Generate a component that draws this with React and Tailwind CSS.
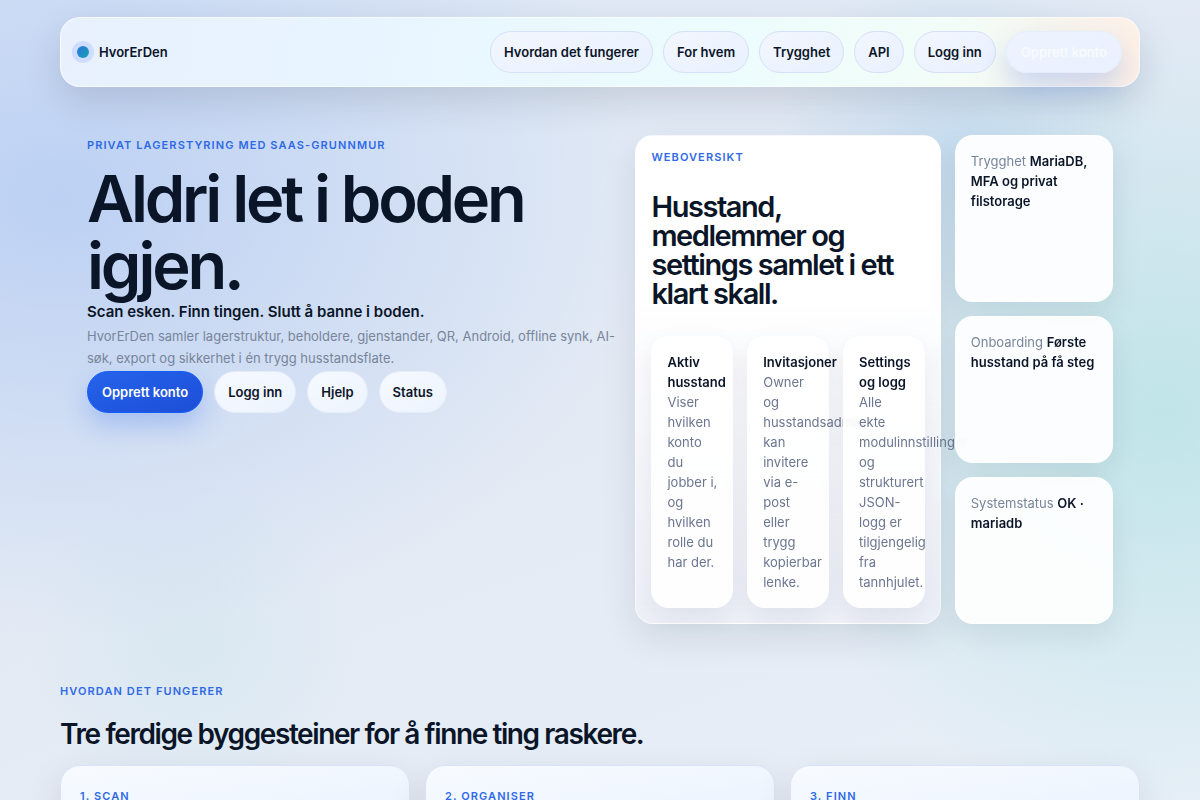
const navLinks = ["Hvordan det fungerer", "For hvem", "Trygghet", "API", "Logg inn"];

const heroLinks = ["Logg inn", "Hjelp", "Status"];

const features = [
  {
    title: "Aktiv husstand",
    text: "Viser hvilken konto du jobber\u00a0i, og hvilken rolle du har der.",
  },
  {
    title: "Invitasjoner",
    text: "Owner og husstandsadmin kan invitere via e-post eller trygg kopierbar lenke.",
  },
  {
    title: "Settings og logg",
    text: "Alle ekte modulinnstillinger og strukturert JSON-logg er tilgjengelig fra tannhjulet.",
  },
];

const facts = [
  { label: "Trygghet", value: "MariaDB, MFA og privat filstorage" },
  { label: "Onboarding", value: "Første husstand på få steg" },
  { label: "Systemstatus", value: "OK · mariadb" },
];

const steps = ["1. Scan", "2. Organiser", "3. Finn"];

const Eyebrow = ({ children }) => (
  <p className="text-[11px] leading-5 font-semibold tracking-widest uppercase text-[#2f6ae6]">
    {children}
  </p>
);

const NavBar = () => (
  <header className="flex items-center justify-between rounded-[20px] border border-white/60 bg-[linear-gradient(100deg,#e8f0fe_0%,#e8f5ff_30%,#ecfcfd_60%,#f2fdf8_82%,#fdf0e6_99%)] py-[13px] pr-[17px] pl-4 shadow-[0_14px_36px_rgba(15,23,42,0.13)]">
    <a href="#top" className="flex items-center gap-2.5 text-[13px] leading-5 font-semibold">
      <span className="h-3 w-3 rounded-full bg-linear-to-br from-[#2f6fdc] to-[#17a3b0] ring-[5px] ring-blue-600/12" />
      HvorErDen
    </a>
    <nav className="flex items-center gap-2.5">
      {navLinks.map((label) => (
        <a
          key={label}
          href="#"
          className="rounded-full border border-[#d6e0f8] bg-linear-to-br from-[#f2f6fe] to-[#e9f1ff] px-[13px] py-2.5 text-[13px] leading-5 font-semibold"
        >
          {label}
        </a>
      ))}
      <a
        href="#"
        className="rounded-full border border-[#e6edfb] bg-linear-to-br from-[#edf3fe] to-[#eaf1ff] px-3.5 py-2.5 text-[13px] leading-5 font-semibold text-[#f8fafe] shadow-[0_14px_28px_rgba(37,99,235,0.22)]"
      >
        Opprett konto
      </a>
    </nav>
  </header>
);

const Hero = () => (
  <section className="grid grid-cols-[1.115fr_1fr] gap-4 px-[27px] pt-12">
    <div className="min-w-0">
      <Eyebrow>Privat lagerstyring med SaaS-grunnmur</Eyebrow>
      <h1 className="mt-2.5 text-[65px] leading-[67px] font-semibold tracking-tighter">
        Aldri let i boden igjen.
      </h1>
      <p className="mt-px text-[15px] leading-6 font-semibold">
        Scan esken. Finn tingen. Slutt å banne i boden.
      </p>
      <p className="mt-px text-[13px] leading-[22px] text-[#78859a]">
        HvorErDen samler lagerstruktur, beholdere, gjenstander, QR, Android, offline synk, AI-søk,
        export og sikkerhet i én trygg husstandsflate.
      </p>
      <div className="mt-0.5 flex gap-[11px]">
        <a
          href="#"
          className="rounded-full border border-blue-600 bg-linear-to-br from-[#2563eb] to-[#1d4ed8] px-3.5 py-2.5 text-[13px] leading-5 font-semibold text-white shadow-[0_12px_26px_rgba(37,99,235,0.26)]"
        >
          Opprett konto
        </a>
        {heroLinks.map((label) => (
          <a
            key={label}
            href="#"
            className="rounded-full border border-[#e6edfa] bg-linear-to-br from-[#f6f9ff] to-[#edf4fe] px-[13px] py-2.5 text-[13px] leading-5 font-semibold"
          >
            {label}
          </a>
        ))}
      </div>
    </div>

    <div className="grid grid-cols-[minmax(0,1.93fr)_minmax(0,1fr)] gap-3.5">
      <div className="rounded-[18px] border border-white/50 bg-linear-to-b from-white from-30% to-[#f0f1f9]/80 px-[15px] pt-[11px] pb-[15px] shadow-[0_14px_36px_rgba(15,23,42,0.09)]">
        <Eyebrow>Weboversikt</Eyebrow>
        <h2 className="mt-[25px] text-[29px] leading-[29px] font-semibold tracking-tighter">
          Husstand, medlemmer og settings samlet i ett klart skall.
        </h2>
        <div className="mt-7 grid grid-cols-3 gap-3.5">
          {features.map(({ title, text }) => (
            <article
              key={title}
              className="min-w-0 rounded-[18px] border border-white bg-white/90 p-[15px] text-[13px] leading-5 shadow-[0_10px_26px_rgba(15,23,42,0.07)] backdrop-blur-[1px]"
            >
              <h3 className="font-semibold">{title}</h3>
              <p className="text-[#6b7690]">{text}</p>
            </article>
          ))}
        </div>
      </div>

      <div className="grid gap-3.5">
        {facts.map(({ label, value }) => (
          <p
            key={label}
            className="rounded-[18px] border border-white/80 bg-white/92 p-[15px] text-[13px] leading-5 text-[#78859a] shadow-[0_12px_30px_rgba(15,23,42,0.08)] backdrop-blur-[1px]"
          >
            {label} <strong className="font-semibold text-[#0b1528]">{value}</strong>
          </p>
        ))}
      </div>
    </div>
  </section>
);

const Steps = () => (
  <section className="pt-[57px]">
    <Eyebrow>Hvordan det fungerer</Eyebrow>
    <h2 className="mt-[18px] text-[28px] leading-[30px] font-semibold tracking-tighter">
      Tre ferdige byggesteiner for å finne ting raskere.
    </h2>
    <div className="mt-4 grid grid-cols-3 gap-[15px]">
      {steps.map((step) => (
        <article
          key={step}
          className="rounded-[20px] border border-[#d9e3f8] bg-linear-to-br from-[#f7fbff] to-[#ebf2fe] px-[19px] py-5 shadow-[0_12px_36px_rgba(15,23,42,0.1)]"
        >
          <Eyebrow>{step}</Eyebrow>
        </article>
      ))}
    </div>
  </section>
);

const App = () => (
  <div
    id="top"
    className="min-h-screen bg-[radial-gradient(600px_440px_at_5%_24%,rgba(59,120,235,0.22),transparent),radial-gradient(400px_400px_at_97%_50%,rgba(45,200,185,0.2),transparent),radial-gradient(circle_at_80%_18%,rgba(80,160,225,0.16),transparent_16%),radial-gradient(circle_at_16%_78%,rgba(45,190,185,0.06),transparent_14%),linear-gradient(160deg,#dfe9f6_0%,#e3eaf4_50%,#e7eff7_100%)] font-[Inter,sans-serif] text-[#0b1528]"
  >
    <main className="mx-auto max-w-[1200px] px-[60px] pt-[17px]">
      <NavBar />
      <Hero />
      <Steps />
    </main>
  </div>
);

export default App;
